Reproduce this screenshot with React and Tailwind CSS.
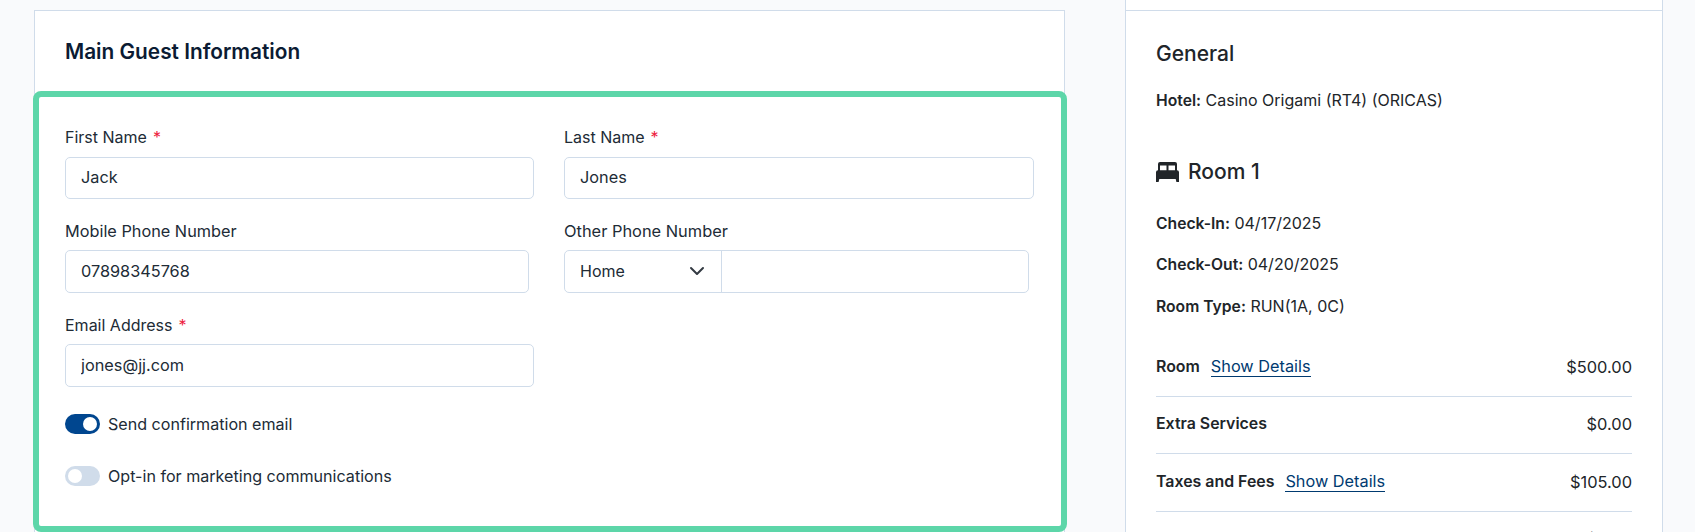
import { ChevronDown } from 'lucide-react'

const fontStack = { fontFamily: 'Inter, "Open Sans", sans-serif' }

function Field({ label, required, value, className = '', labelClass = 'mb-[7px] text-[16px]', inputHeight = 'h-[43px]' }) {
  return (
    <div className={className}>
      <label className={`block leading-6 text-[#212b36] ${labelClass}`}>
        {label}
        {required && <span className="ml-[6px] text-[#ed1c40]">*</span>}
      </label>
      <input
        readOnly
        defaultValue={value}
        className={`block w-full rounded-[5px] border border-[#d0dcea] bg-white px-[15px] pb-[2px] text-[16.3px] text-[#212b36] outline-none ${inputHeight}`}
      />
    </div>
  )
}

function Toggle({ on, label, className = '' }) {
  return (
    <div className={`flex items-center gap-2 ${className}`}>
      <span
        className={`flex h-5 w-[35px] items-center rounded-full px-[3px] ${
          on ? 'justify-end bg-[#00468f]' : 'justify-start bg-[#d0dcea]'
        }`}
      >
        <span className="h-[14px] w-[14px] rounded-full bg-white" />
      </span>
      <span className="text-[16.1px] leading-6 text-[#212b36]">{label}</span>
    </div>
  )
}

function BedIcon() {
  return (
    <svg width="23" height="20" viewBox="0 0 23 20" className="shrink-0 text-[#212529]">
      <path
        fill="currentColor"
        fillRule="evenodd"
        d="M4 0h15a2 2 0 0 1 2 2v6.2a2 2 0 0 1 2 2V20h-2.6l-.7-3H3.3l-.7 3H0v-9.8a2 2 0 0 1 2-2V2a2 2 0 0 1 2-2zM4 3.4v4.8h6.5V3.4zM12.5 3.4v4.8H19V3.4z"
      />
    </svg>
  )
}

function Info({ label, value, className = '' }) {
  return (
    <p className={`text-[16px] leading-6 text-[#212529] ${className}`}>
      <span className="text-[15.7px] font-semibold leading-none">{label}:</span> {value}
    </p>
  )
}

function PriceRow({ label, details, amount, className = '' }) {
  return (
    <div className={`flex items-start justify-between border-b border-[#d0dcea] text-[16px] leading-6 text-[#212529] ${className}`}>
      <span className="flex items-start gap-[11px]">
        <span className="text-[15.9px] font-semibold">{label}</span>
        {details && (
          <a className="mt-[2px] border-b border-[#003a70] text-[16.3px] leading-[19px] text-[#003a70]">Show Details</a>
        )}
      </span>
      <span className="text-[16.4px]">{amount}</span>
    </div>
  )
}

export default function App() {
  return (
    <div style={fontStack} className="flex h-[532px] gap-[60px] overflow-hidden bg-[#f9fafc] pl-[34px]">
      {/* Main guest card */}
      <div className="mt-[10px] w-[1031px] shrink-0 border border-[#d0dcea] border-b-0 bg-white">
        <div className="flex h-[80px] items-center px-[30px] pt-[2px]">
          <h2 className="text-[20.8px] font-semibold text-[#0b1b33]">Main Guest Information</h2>
        </div>

        <div className="-ml-[2px] -mr-[3px] rounded-[8px] border-[6px] border-[#5dd6a9] bg-white pb-[38px] pl-[26px] pr-[27px] pt-7">
          <div className="grid grid-cols-[469px_470px] gap-x-[30px] gap-y-5">
            <Field label="First Name" required value="Jack" labelClass="mb-2 text-[16px]" inputHeight="h-[42px]" />
            <Field label="Last Name" required value="Jones" labelClass="mb-2 text-[16px]" inputHeight="h-[42px]" />
            <Field label="Mobile Phone Number" value="07898345768" className="pr-[5px]" labelClass="mb-[7px] text-[16.3px]" />
            <div className="pr-[5px]">
              <label className="mb-[7px] block text-[16.4px] leading-6 text-[#212b36]">Other Phone Number</label>
              <div className="flex h-[43px] rounded-[5px] border border-[#d0dcea] bg-white">
                <div className="flex w-[157px] shrink-0 items-center justify-between border-r border-[#d0dcea] pb-[2px] pl-[15px] pr-[12px] text-[16px] text-[#212b36]">
                  Home
                  <ChevronDown size={24} strokeWidth={2} className="text-[#333a42]" />
                </div>
                <div className="flex-1" />
              </div>
            </div>
            <Field label="Email Address" required value="jones@jj.com" />
          </div>

          <Toggle on label="Send confirmation email" className="mt-[25px]" />
          <Toggle label="Opt-in for marketing communications" className="mt-7" />
        </div>
      </div>

      {/* Summary sidebar */}
      <div className="w-[538px] shrink-0 border-x border-[#d0dcea] bg-white">
        <div className="h-[11px] border-b border-[#d0dcea]" />
        <div className="px-[30px] pt-[29px]">
          <h3 className="text-[21px] font-medium leading-7 text-[#212529]">General</h3>
          <Info label="Hotel" value="Casino Origami (RT4) (ORICAS)" className="mt-5" />

          <div className="mt-[46px] flex items-center gap-[9px]">
            <BedIcon />
            <h3 className="text-[21px] font-medium leading-7 text-[#212529]">Room 1</h3>
          </div>

          <Info label="Check-In" value="04/17/2025" className="mt-[25px]" />
          <Info label="Check-Out" value="04/20/2025" className="mt-[17px]" />
          <Info label="Room Type" value="RUN(1A, 0C)" className="mt-[18px]" />

          <div className="mt-[37px]">
            <PriceRow label="Room" details amount="$500.00" className="pb-[17px]" />
            <PriceRow label="Extra Services" amount="$0.00" className="pb-[17px] pt-[15px]" />
            <PriceRow label="Taxes and Fees" details amount="$105.00" className="pb-[17px] pt-[16px]" />
            <div className="flex justify-end pt-[15px] text-[16.4px] leading-6 text-[#212529]">$0.00</div>
          </div>
        </div>
      </div>
    </div>
  )
}
